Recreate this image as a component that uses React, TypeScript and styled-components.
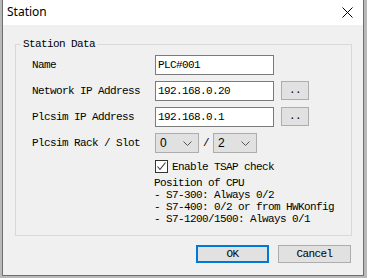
import React from "react";
import styled, { createGlobalStyle } from "styled-components";

const mono = `"Liberation Mono", "Courier New", monospace`;

const GlobalStyle = createGlobalStyle`
  html, body {
    margin: 0;
    padding: 0;
    background: #b9b9b9;
  }
`;

const Dialog = styled.div`
  margin-left: 2px;
  width: 360px;
  height: 275px;
  background: #f0f0f0;
  border: 1px solid #6f6f6f;
  border-top: none;
  display: flex;
  flex-direction: column;
  font-family: ${mono};
  font-size: 11px;
  letter-spacing: -0.6px;
  color: #000;
`;

const TitleBar = styled.div`
  height: 25px;
  background: #fff;
  display: flex;
  align-items: center;
  justify-content: space-between;
  padding: 0 10px 0 4px;
`;

const Title = styled.span`
  font-family: "Noto Sans", "Noto Sans CJK SC", sans-serif;
  font-size: 12px;
  letter-spacing: 0;
  margin-top: -2px;
`;

const Body = styled.div`
  flex: 1;
  display: flex;
  flex-direction: column;
  padding: 19px 11px 0 12px;
`;

const Group = styled.div`
  position: relative;
  border: 1px solid #d9d9d9;
  height: 192px;
  box-sizing: border-box;
  padding: 10px 0 0 16px;
`;

const Legend = styled.span`
  position: absolute;
  top: -8px;
  left: 5px;
  padding: 0 2px;
  background: #f0f0f0;
  line-height: 14px;
`;

const Form = styled.div`
  display: grid;
  grid-template-columns: 123px auto;
  grid-auto-rows: 20px;
  row-gap: 6px;
  align-items: center;
`;

const Label = styled.span`
  line-height: 20px;
`;

const Field = styled.div`
  display: flex;
  align-items: center;
  gap: 7px;
`;

const TextBox = styled.div`
  width: 119px;
  height: 20px;
  box-sizing: border-box;
  border: 1px solid #7a7a7a;
  background: #fff;
  padding-left: 2px;
  line-height: 18px;
`;

const SmallButton = styled.div`
  width: 28px;
  height: 19px;
  box-sizing: border-box;
  border: 1px solid #adadad;
  background: #e1e1e1;
  display: flex;
  align-items: center;
  justify-content: center;
  margin-top: -2px;
`;

const Select = styled.div<{ $w: number }>`
  width: ${(p) => p.$w}px;
  height: 20px;
  box-sizing: border-box;
  border: 1px solid #adadad;
  background: #e1e1e1;
  display: flex;
  align-items: center;
  justify-content: space-between;
  padding: 0 6px 0 4px;
  font-family: "Liberation Sans", Arial, sans-serif;
  font-size: 12px;
  letter-spacing: 0;
`;

const Slash = styled.span`
  width: 14px;
  text-align: center;
`;

const Extra = styled.div`
  margin-left: 123px;
  margin-top: 7px;
  display: flex;
  flex-direction: column;
`;

const CheckRow = styled.div`
  display: flex;
  align-items: center;
  gap: 4px;
  height: 13px;
`;

const CheckBox = styled.div`
  width: 13px;
  height: 13px;
  box-sizing: border-box;
  border: 1px solid #333;
  background: #fff;
  display: flex;
  align-items: center;
  justify-content: center;
`;

const Info = styled.div`
  margin-top: 4px;
  margin-left: -1px;
  line-height: 12px;
  white-space: pre;
`;

const Footer = styled.div`
  display: flex;
  justify-content: flex-end;
  gap: 9px;
  margin-top: 9px;
  padding-right: 1px;
`;

const DialogButton = styled.div<{ $default?: boolean }>`
  width: 73px;
  height: 18px;
  box-sizing: border-box;
  border: ${(p) => (p.$default ? "2px solid #0078d7" : "1px solid #adadad")};
  background: #e1e1e1;
  display: flex;
  align-items: center;
  justify-content: center;
`;

const Chevron = () => (
  <svg width="9" height="5" viewBox="0 0 9 5">
    <path d="M0.5 0.5 L4.5 4.5 L8.5 0.5" fill="none" stroke="#555" strokeWidth="1" />
  </svg>
);

const CloseIcon = () => (
  <svg width="11" height="11" viewBox="0 0 11 11">
    <path d="M0.5 0.5 L10.5 10.5 M10.5 0.5 L0.5 10.5" stroke="#000" strokeWidth="1" />
  </svg>
);

const Check = () => (
  <svg width="11" height="11" viewBox="0 0 11 11">
    <path d="M1.5 5.5 L4 8.5 L9.5 1.5" fill="none" stroke="#333" strokeWidth="1.1" />
  </svg>
);

export default function App() {
  return (
    <>
      <GlobalStyle />
      <Dialog>
        <TitleBar>
          <Title>Station</Title>
          <CloseIcon />
        </TitleBar>
        <Body>
          <Group>
            <Legend>Station Data</Legend>
            <Form>
              <Label>Name</Label>
              <Field>
                <TextBox>PLC#001</TextBox>
              </Field>
              <Label>Network IP Address</Label>
              <Field>
                <TextBox>192.168.0.20</TextBox>
                <SmallButton>..</SmallButton>
              </Field>
              <Label>Plcsim IP Address</Label>
              <Field>
                <TextBox>192.168.0.1</TextBox>
                <SmallButton>..</SmallButton>
              </Field>
              <Label>Plcsim Rack / Slot</Label>
              <Field style={{ gap: 0 }}>
                <Select $w={44}>
                  0 <Chevron />
                </Select>
                <Slash>/</Slash>
                <Select $w={44}>
                  2 <Chevron />
                </Select>
              </Field>
            </Form>
            <Extra>
              <CheckRow>
                <CheckBox>
                  <Check />
                </CheckBox>
                Enable TSAP check
              </CheckRow>
              <Info>
                {"Position of CPU\n- S7-300: Always 0/2\n- S7-400: 0/2 or from HWKonfig\n- S7-1200/1500: Always 0/1"}
              </Info>
            </Extra>
          </Group>
          <Footer>
            <DialogButton $default>OK</DialogButton>
            <DialogButton>Cancel</DialogButton>
          </Footer>
        </Body>
      </Dialog>
    </>
  );
}
